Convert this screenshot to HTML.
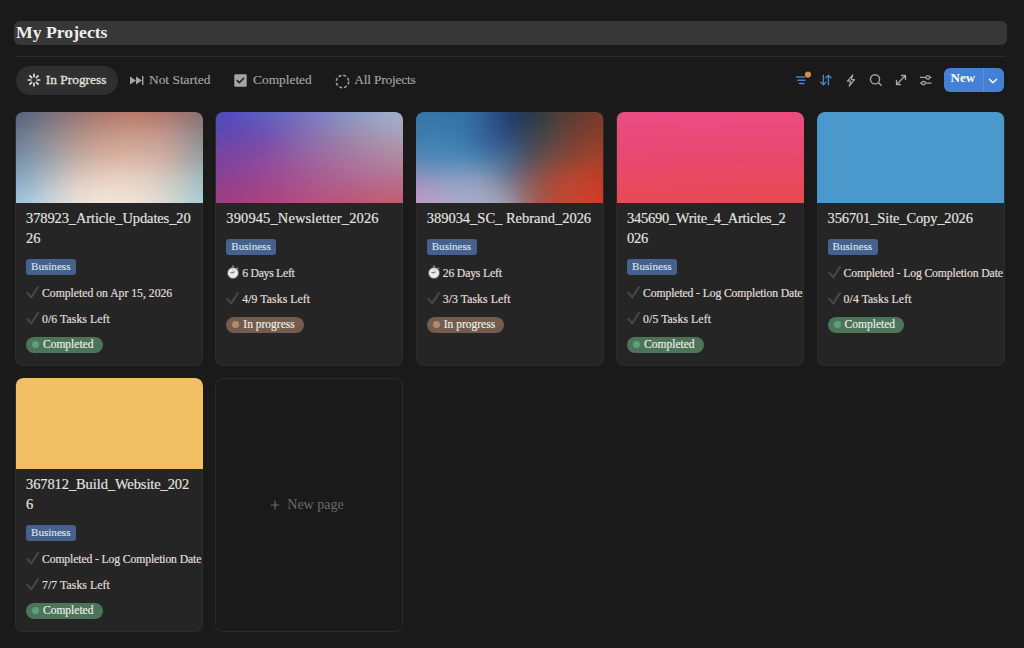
<!DOCTYPE html>
<html><head><meta charset="utf-8">
<style>
*{box-sizing:border-box;margin:0;padding:0}
html,body{width:1024px;height:648px;overflow:hidden;background:#1a1a1a;font-family:"Liberation Serif",serif;color:#e4e2de}
.abs{position:absolute}
#titlebar{position:absolute;left:14px;top:21px;width:993px;height:24px;background:#373737;border-radius:6px}
#title{position:absolute;left:16px;top:20px;font-weight:bold;font-size:17.7px;line-height:24px;color:#f0eeea;white-space:nowrap}
#divider{position:absolute;left:16px;top:56px;width:990px;height:1px;background:#2c2c2c}
.pill{position:absolute;left:16px;top:66px;width:102px;height:28.5px;border-radius:15px;background:#2f2f2f}
.tab{position:absolute;top:72px;font-size:13.4px;line-height:16px;white-space:nowrap;color:#a8a59f;-webkit-text-stroke:0.15px #a8a59f}
.tab.act{color:#e2e0dc;-webkit-text-stroke:0.3px #e2e0dc}
.card{position:absolute;width:188px;height:253.5px;background:#252525;border-radius:8px;box-shadow:0 0 0 1px #2c2c2b inset;overflow:hidden}
.cover{position:absolute;left:0.5px;top:0;width:187px;height:90.5px;border-radius:7px 7px 0 0;overflow:hidden}
.ctitle{position:absolute;left:11px;top:96px;font-size:14.5px;line-height:20px;color:#e6e4e0;white-space:nowrap;-webkit-text-stroke:0.15px #e6e4e0}
.tag{position:absolute;left:11px;height:15.7px;width:50px;border-radius:3px;background:#46628c;color:#dfe7f1;font-size:11.1px;line-height:15.7px;padding-left:5px;white-space:nowrap;-webkit-text-stroke:0.1px #dfe7f1}
.prop{position:absolute;left:11px;font-size:11.7px;line-height:16px;white-space:nowrap;color:#e0ded9;-webkit-text-stroke:0.2px #e0ded9}
.prop .ic{position:absolute;left:0;top:0}
.prop span.t{position:absolute;left:16px;top:0}
.badge{position:absolute;left:11px;height:15.5px;border-radius:8px;font-size:11.5px;line-height:15.5px;color:#eef0ec;white-space:nowrap;padding-left:17px;-webkit-text-stroke:0.15px #eef0ec}
.badge i{position:absolute;left:6px;top:4.3px;width:7px;height:7px;border-radius:50%}
.green{background:#4c7458}.green i{background:#5fa078}
.brown{background:#735c4b}.brown i{background:#af8c6e}
</style></head>
<body>
<div id="titlebar"></div>
<div id="title">My Projects</div>
<div id="divider"></div>
<div class="pill"></div>
<div class="tab act" style="left:45.8px">In Progress</div>
<div class="tab" style="left:149px">Not Started</div>
<div class="tab" style="left:253px">Completed</div>
<div class="tab" style="left:354.3px;letter-spacing:-0.2px">All Projects</div>

<!-- tab icons -->
<svg class="abs" style="left:26px;top:72.2px" width="16" height="16" viewBox="0 0 16 16"><g stroke="#e2e0dc" stroke-width="1.7" stroke-linecap="round"><line x1="11.30" y1="8.00" x2="13.70" y2="8.00"/><line x1="10.33" y1="10.33" x2="12.03" y2="12.03"/><line x1="8.00" y1="11.30" x2="8.00" y2="13.70"/><line x1="5.67" y1="10.33" x2="3.97" y2="12.03"/><line x1="4.70" y1="8.00" x2="2.30" y2="8.00"/><line x1="5.67" y1="5.67" x2="3.97" y2="3.97"/><line x1="8.00" y1="4.70" x2="8.00" y2="2.30"/><line x1="10.33" y1="5.67" x2="12.03" y2="3.97"/></g></svg>
<svg class="abs" style="left:129px;top:75px" width="16" height="11" viewBox="0 0 16 11">
<path d="M1 1.5 L7 5.5 L1 9.5Z M7 1.5 L13 5.5 L7 9.5Z" fill="#a8a59f"/>
<rect x="13" y="1" width="1.4" height="9" fill="#a8a59f"/>
</svg>
<svg class="abs" style="left:234px;top:74px" width="13" height="13" viewBox="0 0 13 13">
<rect x="0.3" y="0.3" width="12.4" height="12.4" rx="1" fill="#a8a59f"/>
<path d="M3.3 6.6 L5.4 8.7 L9.6 4.3" fill="none" stroke="#1f1f1f" stroke-width="1.6" stroke-linecap="round" stroke-linejoin="round"/>
</svg>
<svg class="abs" style="left:335px;top:73.5px" width="15" height="15" viewBox="0 0 15 15">
<circle cx="7.5" cy="7.5" r="6.2" fill="none" stroke="#a8a59f" stroke-width="1.5" stroke-dasharray="3 1.87"/>
</svg>
<!-- toolbar icons -->
<svg class="abs" style="left:794px;top:70px" width="18" height="18" viewBox="0 0 18 18">
<g stroke="#4a82cc" stroke-width="1.5" stroke-linecap="round">
<line x1="2.5" y1="7" x2="11" y2="7"/><line x1="4" y1="10.2" x2="11" y2="10.2"/><line x1="5.5" y1="13.4" x2="10" y2="13.4"/>
</g>
<circle cx="14" cy="4.6" r="3.1" fill="#d68a4e"/>
</svg>
<svg class="abs" style="left:819px;top:74px" width="14" height="12" viewBox="0 0 14 12">
<g stroke="#4a82cc" stroke-width="1.4" fill="none" stroke-linecap="round" stroke-linejoin="round">
<path d="M4.4 1.2 V10.8 M1.8 8.2 L4.4 10.8 L7 8.2"/>
<path d="M9.4 10.8 V1.2 M6.8 3.8 L9.4 1.2 L12 3.8"/>
</g></svg>
<svg class="abs" style="left:845px;top:73.5px" width="12" height="13" viewBox="0 0 12 13">
<path d="M7.8 0.9 L2.4 7.2 H5.7 L4.2 12.2 L9.6 5.6 H6.3 Z" fill="none" stroke="#a8a59f" stroke-width="1.2" stroke-linejoin="round"/>
</svg>
<svg class="abs" style="left:868px;top:72px" width="16" height="16" viewBox="0 0 16 16">
<circle cx="7" cy="7.3" r="4.6" fill="none" stroke="#a8a59f" stroke-width="1.4"/>
<line x1="10.3" y1="10.6" x2="13.2" y2="13.3" stroke="#a8a59f" stroke-width="1.4" stroke-linecap="round"/>
</svg>
<svg class="abs" style="left:894px;top:73px" width="14" height="14" viewBox="0 0 14 14">
<g stroke="#a8a59f" stroke-width="1.3" fill="none" stroke-linecap="round" stroke-linejoin="round">
<path d="M2.5 11.5 L11.5 2.5 M7.5 2.5 H11.5 V6.5 M2.5 7.5 V11.5 H6.5"/>
</g></svg>
<svg class="abs" style="left:918px;top:73px" width="16" height="14" viewBox="0 0 16 14">
<g stroke="#a8a59f" stroke-width="1.3" fill="none">
<line x1="2" y1="4.4" x2="13.5" y2="4.4"/><line x1="2" y1="10.1" x2="13.5" y2="10.1"/>
<circle cx="9.8" cy="4.4" r="1.8" fill="#1a1a1a"/><circle cx="5.6" cy="10.1" r="1.8" fill="#1a1a1a"/>
</g></svg>
<div class="abs" style="left:943.5px;top:68px;width:60.5px;height:24.2px;border-radius:6px;background:#4481d6"></div>
<div class="abs" style="left:983.3px;top:68px;width:1px;height:24.2px;background:#5b90d8"></div>
<div class="abs" style="left:950.5px;top:67.6px;font-weight:bold;font-size:13px;line-height:20px;color:#ffffff">New</div>
<svg class="abs" style="left:987px;top:76px" width="12" height="10" viewBox="0 0 12 10">
<path d="M2.4 3.2 L6 6.8 L9.6 3.2" fill="none" stroke="#ffffff" stroke-width="1.4" stroke-linecap="round" stroke-linejoin="round"/>
</svg>
<!--CARDS--><div class="card" style="left:15px;top:112px"><div class="cover c0"><div style="position:absolute;inset:0;background:linear-gradient(to right, #5a6482, #656a80, #74707e, #85747a, #967676, #a57871, #b07a6c, #b77a6a, #b87a6a, #b2786d, #a87670, #987471, #8a7272)"></div><div style="position:absolute;inset:0;background:linear-gradient(to right, #616c87, #6d7387, #7e7a85, #907e81, #a2817d, #af857a, #b98778, #be8978, #bf8878, #ba867c, #af847f, #9c807e, #8b7c7c);-webkit-mask-image:linear-gradient(to bottom, transparent 0.0%, #000 12.5%);mask-image:linear-gradient(to bottom, transparent 0.0%, #000 12.5%)"></div><div style="position:absolute;inset:0;background:linear-gradient(to right, #6a7890, #788090, #8a8890, #9e8c8c, #b09088, #bc9487, #c49888, #c89a89, #c89a8a, #c3988e, #b89490, #a28f8d, #8e8a8a);-webkit-mask-image:linear-gradient(to bottom, transparent 12.5%, #000 25.0%);mask-image:linear-gradient(to bottom, transparent 12.5%, #000 25.0%)"></div><div style="position:absolute;inset:0;background:linear-gradient(to right, #71849c, #7e8b9d, #91949c, #a59999, #b89e95, #c5a294, #cda595, #d1a796, #d0a797, #caa499, #bea09a, #a79b98, #929696);-webkit-mask-image:linear-gradient(to bottom, transparent 25.0%, #000 37.5%);mask-image:linear-gradient(to bottom, transparent 25.0%, #000 37.5%)"></div><div style="position:absolute;inset:0;background:linear-gradient(to right, #7890aa, #8697aa, #98a0aa, #ada7a7, #c0aca4, #cdb0a2, #d6b2a2, #dab4a3, #d8b4a4, #d1b1a4, #c4aca4, #ada6a3, #98a2a2);-webkit-mask-image:linear-gradient(to bottom, transparent 37.5%, #000 50.0%);mask-image:linear-gradient(to bottom, transparent 37.5%, #000 50.0%)"></div><div style="position:absolute;inset:0;background:linear-gradient(to right, #809db7, #8fa5b7, #a4aeb7, #bab5b6, #cebbb4, #dac0b4, #e0c2b3, #e1c4b4, #dec3b5, #d6bfb4, #c8bab2, #b2b4b2, #9eb0b2);-webkit-mask-image:linear-gradient(to bottom, transparent 50.0%, #000 62.5%);mask-image:linear-gradient(to bottom, transparent 50.0%, #000 62.5%)"></div><div style="position:absolute;inset:0;background:linear-gradient(to right, #88aac4, #99b2c4, #b0bcc4, #c8c4c4, #dccac4, #e5cfc4, #e8d2c4, #e8d2c4, #e4d0c4, #dacdc2, #ccc8c0, #b6c2c0, #a4bcc0);-webkit-mask-image:linear-gradient(to bottom, transparent 62.5%, #000 75.0%);mask-image:linear-gradient(to bottom, transparent 62.5%, #000 75.0%)"></div><div style="position:absolute;inset:0;background:linear-gradient(to right, #93b9d1, #a5c0d1, #bccad2, #d2d1d1, #e4d7d0, #ecdbd0, #eeddd0, #eedccf, #e9dace, #ded6cc, #ced2ca, #b9cbca, #a7c6ca);-webkit-mask-image:linear-gradient(to bottom, transparent 75.0%, #000 87.5%);mask-image:linear-gradient(to bottom, transparent 75.0%, #000 87.5%)"></div><div style="position:absolute;inset:0;background:linear-gradient(to right, #9cc4da, #aecbdb, #c4d4dc, #d8dbda, #e8e0d8, #f0e3d8, #f2e4d8, #f1e3d6, #ece0d4, #e0dcd2, #d0d8d0, #bad2d0, #a8ccd0);-webkit-mask-image:linear-gradient(to bottom, transparent 87.5%, #000 100.0%);mask-image:linear-gradient(to bottom, transparent 87.5%, #000 100.0%)"></div></div><div class="ctitle" style="letter-spacing:-0.12px">378923_Article_Updates_20<br>26</div><div class="tag" style="top:147px">Business</div><div class="prop" style="top:173.5px"><svg class="ic" width="14" height="14" viewBox="0 0 14 14" style="top:-1px"><path d="M1.3 7.9 L5.2 12.4 L11.9 2.2" fill="none" stroke="#474747" stroke-width="2.1" stroke-linecap="round" stroke-linejoin="round"/></svg><span class="t" style="letter-spacing:0px">Completed on Apr 15, 2026</span></div><div class="prop" style="top:200.0px"><svg class="ic" width="14" height="14" viewBox="0 0 14 14" style="top:-1px"><path d="M1.3 7.9 L5.2 12.4 L11.9 2.2" fill="none" stroke="#474747" stroke-width="2.1" stroke-linecap="round" stroke-linejoin="round"/></svg><span class="t" style="letter-spacing:0.1px">0/6 Tasks Left</span></div><div class="badge green" style="top:225.2px;width:76.5px"><i></i>Completed</div></div>
<div class="card" style="left:215.3px;top:112px"><div class="cover c1"><div style="position:absolute;inset:0;background:linear-gradient(to right, #5048c0, #544ec0, #5957c0, #6060c0, #6768c1, #706fc3, #7878c4, #8084c5, #8791c7, #8e9cc8, #95a5c9, #9babcb, #a0b0cc)"></div><div style="position:absolute;inset:0;background:linear-gradient(to right, #5648b9, #5a4cb9, #6051b9, #6658b9, #6e61ba, #776aba, #7f75bb, #8680bc, #8e8bbc, #9495bd, #9a9ebf, #a0a5c2, #a4a9c4);-webkit-mask-image:linear-gradient(to bottom, transparent 0.0%, #000 12.5%);mask-image:linear-gradient(to bottom, transparent 0.0%, #000 12.5%)"></div><div style="position:absolute;inset:0;background:linear-gradient(to right, #6048b0, #6449b0, #694bb0, #7050b0, #7859b0, #8065b0, #8870b0, #8f7ab0, #9683af, #9c8cb0, #a194b2, #a59bb6, #a8a0b8);-webkit-mask-image:linear-gradient(to bottom, transparent 12.5%, #000 25.0%);mask-image:linear-gradient(to bottom, transparent 12.5%, #000 25.0%)"></div><div style="position:absolute;inset:0;background:linear-gradient(to right, #6d46a8, #7147a8, #7749a8, #7d4da8, #8455a8, #8a60a8, #916aa8, #9773a8, #9d7ba7, #a283a8, #a78aa9, #aa91aa, #ac96ac);-webkit-mask-image:linear-gradient(to bottom, transparent 25.0%, #000 37.5%);mask-image:linear-gradient(to bottom, transparent 25.0%, #000 37.5%)"></div><div style="position:absolute;inset:0;background:linear-gradient(to right, #7a44a0, #7e45a0, #8448a0, #8a4ca0, #8f53a0, #955ca0, #9a64a0, #9f6ca0, #a473a0, #a87aa0, #ab80a0, #ae86a0, #b08aa0);-webkit-mask-image:linear-gradient(to bottom, transparent 37.5%, #000 50.0%);mask-image:linear-gradient(to bottom, transparent 37.5%, #000 50.0%)"></div><div style="position:absolute;inset:0;background:linear-gradient(to right, #834298, #874498, #8d4698, #934a98, #985098, #9d5798, #a15e98, #a56498, #a96b98, #ac7198, #af7699, #b27a99, #b47d98);-webkit-mask-image:linear-gradient(to bottom, transparent 50.0%, #000 62.5%);mask-image:linear-gradient(to bottom, transparent 50.0%, #000 62.5%)"></div><div style="position:absolute;inset:0;background:linear-gradient(to right, #8c4090, #904290, #954490, #9a4890, #9f4d90, #a45290, #a85890, #ab5e90, #ae6390, #b06890, #b36c90, #b66e90, #b87090);-webkit-mask-image:linear-gradient(to bottom, transparent 62.5%, #000 75.0%);mask-image:linear-gradient(to bottom, transparent 62.5%, #000 75.0%)"></div><div style="position:absolute;inset:0;background:linear-gradient(to right, #973e87, #9a4087, #9e4287, #a24687, #a64a87, #ab4f87, #af5387, #b25786, #b45b84, #b65f83, #b96282, #bb6580, #bc667f);-webkit-mask-image:linear-gradient(to bottom, transparent 75.0%, #000 87.5%);mask-image:linear-gradient(to bottom, transparent 75.0%, #000 87.5%)"></div><div style="position:absolute;inset:0;background:linear-gradient(to right, #a03c80, #a23e80, #a54180, #a84480, #ac4880, #b04c81, #b45080, #b7537e, #ba557b, #bc5878, #be5b75, #bf5e72, #c06070);-webkit-mask-image:linear-gradient(to bottom, transparent 87.5%, #000 100.0%);mask-image:linear-gradient(to bottom, transparent 87.5%, #000 100.0%)"></div></div><div class="ctitle" style="letter-spacing:0.114px">390945_Newsletter_2026</div><div class="tag" style="top:127px">Business</div><div class="prop" style="top:153.5px"><svg class="ic" width="14" height="14" viewBox="0 0 14 14" style="top:-0.5px"><rect x="5.9" y="0.5" width="2.2" height="2.4" rx="0.4" fill="#7d7f84"/><rect x="10.2" y="2.4" width="1.9" height="2.4" rx="0.4" transform="rotate(45 11.15 3.6)" fill="#7d7f84"/><circle cx="7" cy="8" r="5.5" fill="#ececf0" stroke="#5d5f64" stroke-width="0.9"/><line x1="7" y1="8" x2="7" y2="3.7" stroke="#e0a070" stroke-width="0.7"/><line x1="7" y1="8" x2="4.4" y2="7.5" stroke="#4a4a4a" stroke-width="0.8"/><line x1="7" y1="8" x2="8.9" y2="6.5" stroke="#4a4a4a" stroke-width="0.7"/></svg><span class="t" style="letter-spacing:-0.27px">6 Days Left</span></div><div class="prop" style="top:180.0px"><svg class="ic" width="14" height="14" viewBox="0 0 14 14" style="top:-1px"><path d="M1.3 7.9 L5.2 12.4 L11.9 2.2" fill="none" stroke="#474747" stroke-width="2.1" stroke-linecap="round" stroke-linejoin="round"/></svg><span class="t" style="letter-spacing:0.1px">4/9 Tasks Left</span></div><div class="badge brown" style="top:205.2px;width:77.5px"><i></i>In progress</div></div>
<div class="card" style="left:415.7px;top:112px"><div class="cover c2"><div style="position:absolute;inset:0;background:linear-gradient(to right, #3878a8, #3775a7, #3574a6, #3272a4, #306599, #2a5285, #22406c, #253a53, #333b41, #4a3e38, #5a3d32, #6b3c2e, #7a3c2c)"></div><div style="position:absolute;inset:0;background:linear-gradient(to right, #3879a9, #3979aa, #3878a9, #3573a6, #32659c, #2c548a, #264471, #2b3f56, #3a3f44, #50413c, #633f35, #753d30, #823c2c);-webkit-mask-image:linear-gradient(to bottom, transparent 0.0%, #000 12.5%);mask-image:linear-gradient(to bottom, transparent 0.0%, #000 12.5%)"></div><div style="position:absolute;inset:0;background:linear-gradient(to right, #3c7cac, #3e7eae, #3d7dae, #3a76aa, #3668a1, #315990, #2e4c78, #35465c, #454449, #5a4440, #704138, #823f31, #8e3c2c);-webkit-mask-image:linear-gradient(to bottom, transparent 12.5%, #000 25.0%);mask-image:linear-gradient(to bottom, transparent 12.5%, #000 25.0%)"></div><div style="position:absolute;inset:0;background:linear-gradient(to right, #4682b2, #4583b2, #4382b1, #417eae, #3d71a7, #3a6498, #3a5880, #424d62, #52484c, #684741, #7d4436, #8e402f, #9a3d2c);-webkit-mask-image:linear-gradient(to bottom, transparent 25.0%, #000 37.5%);mask-image:linear-gradient(to bottom, transparent 25.0%, #000 37.5%)"></div><div style="position:absolute;inset:0;background:linear-gradient(to right, #5888b8, #5488b7, #5189b6, #4e88b4, #4b7eae, #49729f, #4a6488, #535667, #644d4e, #7a4a40, #8c4633, #9c422d, #a83e2c);-webkit-mask-image:linear-gradient(to bottom, transparent 37.5%, #000 50.0%);mask-image:linear-gradient(to bottom, transparent 37.5%, #000 50.0%)"></div><div style="position:absolute;inset:0;background:linear-gradient(to right, #778cbc, #738fbc, #6f93bd, #6c95bc, #6a8eb5, #6581a5, #5f6e8c, #6a5d68, #7d514d, #934a3d, #a34633, #af422c, #b73d29);-webkit-mask-image:linear-gradient(to bottom, transparent 50.0%, #000 62.5%);mask-image:linear-gradient(to bottom, transparent 50.0%, #000 62.5%)"></div><div style="position:absolute;inset:0;background:linear-gradient(to right, #9890c0, #9497c1, #909dc3, #8ca0c4, #8a9dbb, #828faa, #767890, #816469, #94554b, #aa4a3a, #b74633, #c0412c, #c43c26);-webkit-mask-image:linear-gradient(to bottom, transparent 62.5%, #000 75.0%);mask-image:linear-gradient(to bottom, transparent 62.5%, #000 75.0%)"></div><div style="position:absolute;inset:0;background:linear-gradient(to right, #b096c4, #aa9cc5, #a4a2c7, #9ea6c7, #9ca5c2, #959bb4, #8c879a, #926b6d, #a1564a, #b44a39, #c04632, #c8412c, #cc3b24);-webkit-mask-image:linear-gradient(to bottom, transparent 75.0%, #000 87.5%);mask-image:linear-gradient(to bottom, transparent 75.0%, #000 87.5%)"></div><div style="position:absolute;inset:0;background:linear-gradient(to right, #c09cc8, #b8a0c8, #b0a4c8, #a8a8c8, #a5aac8, #a1a4bd, #9c94a4, #9d7070, #a75649, #b84a38, #c44632, #cc412b, #d03a22);-webkit-mask-image:linear-gradient(to bottom, transparent 87.5%, #000 100.0%);mask-image:linear-gradient(to bottom, transparent 87.5%, #000 100.0%)"></div></div><div class="ctitle" style="letter-spacing:-0.014px">389034_SC_ Rebrand_2026</div><div class="tag" style="top:127px">Business</div><div class="prop" style="top:153.5px"><svg class="ic" width="14" height="14" viewBox="0 0 14 14" style="top:-0.5px"><rect x="5.9" y="0.5" width="2.2" height="2.4" rx="0.4" fill="#7d7f84"/><rect x="10.2" y="2.4" width="1.9" height="2.4" rx="0.4" transform="rotate(45 11.15 3.6)" fill="#7d7f84"/><circle cx="7" cy="8" r="5.5" fill="#ececf0" stroke="#5d5f64" stroke-width="0.9"/><line x1="7" y1="8" x2="7" y2="3.7" stroke="#e0a070" stroke-width="0.7"/><line x1="7" y1="8" x2="4.4" y2="7.5" stroke="#4a4a4a" stroke-width="0.8"/><line x1="7" y1="8" x2="8.9" y2="6.5" stroke="#4a4a4a" stroke-width="0.7"/></svg><span class="t" style="letter-spacing:-0.15px">26 Days Left</span></div><div class="prop" style="top:180.0px"><svg class="ic" width="14" height="14" viewBox="0 0 14 14" style="top:-1px"><path d="M1.3 7.9 L5.2 12.4 L11.9 2.2" fill="none" stroke="#474747" stroke-width="2.1" stroke-linecap="round" stroke-linejoin="round"/></svg><span class="t" style="letter-spacing:0.1px">3/3 Tasks Left</span></div><div class="badge brown" style="top:205.2px;width:77.5px"><i></i>In progress</div></div>
<div class="card" style="left:616.1px;top:112px"><div class="cover c3"><div style="position:absolute;inset:0;background:linear-gradient(to right, #ea4c84, #ea4c84, #ea4c83, #ea4c83, #eb4c83, #eb4c82, #eb4c82, #eb4c82, #eb4c81, #ec4c81, #ec4c81, #ec4c80, #ec4c80)"></div><div style="position:absolute;inset:0;background:linear-gradient(to right, #ea4c80, #ea4c80, #ea4c80, #ea4c7f, #ea4c7f, #ea4c7f, #ea4c7f, #eb4c7e, #eb4c7e, #eb4c7e, #eb4c7d, #eb4c7d, #eb4c7d);-webkit-mask-image:linear-gradient(to bottom, transparent 0.0%, #000 12.5%);mask-image:linear-gradient(to bottom, transparent 0.0%, #000 12.5%)"></div><div style="position:absolute;inset:0;background:linear-gradient(to right, #e94b7b, #e94b7b, #e94b7b, #e94b7a, #e94b7a, #e94b7a, #ea4b7a, #ea4b79, #ea4b79, #ea4b79, #ea4b78, #ea4b78, #ea4b78);-webkit-mask-image:linear-gradient(to bottom, transparent 12.5%, #000 25.0%);mask-image:linear-gradient(to bottom, transparent 12.5%, #000 25.0%)"></div><div style="position:absolute;inset:0;background:linear-gradient(to right, #e84a76, #e84a75, #e84a75, #e94a75, #e94a74, #e94a74, #e94a74, #e94a74, #e94a73, #e94a73, #e94a73, #e94a72, #e94a72);-webkit-mask-image:linear-gradient(to bottom, transparent 25.0%, #000 37.5%);mask-image:linear-gradient(to bottom, transparent 25.0%, #000 37.5%)"></div><div style="position:absolute;inset:0;background:linear-gradient(to right, #e84a70, #e84a70, #e84a6f, #e84a6f, #e84a6f, #e84a6e, #e84a6e, #e84a6e, #e84a6d, #e84a6d, #e84a6d, #e84a6c, #e84a6c);-webkit-mask-image:linear-gradient(to bottom, transparent 37.5%, #000 50.0%);mask-image:linear-gradient(to bottom, transparent 37.5%, #000 50.0%)"></div><div style="position:absolute;inset:0;background:linear-gradient(to right, #e84a6a, #e84a6a, #e84a69, #e84a69, #e84a68, #e84a68, #e84a68, #e84a67, #e84a67, #e84a66, #e84a66, #e84a65, #e84a65);-webkit-mask-image:linear-gradient(to bottom, transparent 50.0%, #000 62.5%);mask-image:linear-gradient(to bottom, transparent 50.0%, #000 62.5%)"></div><div style="position:absolute;inset:0;background:linear-gradient(to right, #e84a64, #e84a63, #e84a63, #e84a62, #e84a61, #e84a61, #e84a60, #e84a60, #e84a5f, #e84a5e, #e84a5e, #e84a5d, #e84a5d);-webkit-mask-image:linear-gradient(to bottom, transparent 62.5%, #000 75.0%);mask-image:linear-gradient(to bottom, transparent 62.5%, #000 75.0%)"></div><div style="position:absolute;inset:0;background:linear-gradient(to right, #e84a5e, #e84a5d, #e84a5d, #e84a5c, #e84a5b, #e84a5a, #e84a5a, #e84a59, #e84a58, #e84a57, #e84a57, #e84a56, #e84a55);-webkit-mask-image:linear-gradient(to bottom, transparent 75.0%, #000 87.5%);mask-image:linear-gradient(to bottom, transparent 75.0%, #000 87.5%)"></div><div style="position:absolute;inset:0;background:linear-gradient(to right, #e84a5a, #e84a59, #e84a58, #e84a58, #e84a57, #e84a56, #e84a55, #e84a54, #e84a53, #e84a52, #e84a52, #e84a51, #e84a50);-webkit-mask-image:linear-gradient(to bottom, transparent 87.5%, #000 100.0%);mask-image:linear-gradient(to bottom, transparent 87.5%, #000 100.0%)"></div></div><div class="ctitle" style="letter-spacing:-0.283px">345690_Write_4_Articles_2<br>026</div><div class="tag" style="top:147px">Business</div><div class="prop" style="top:173.5px"><svg class="ic" width="14" height="14" viewBox="0 0 14 14" style="top:-1px"><path d="M1.3 7.9 L5.2 12.4 L11.9 2.2" fill="none" stroke="#474747" stroke-width="2.1" stroke-linecap="round" stroke-linejoin="round"/></svg><span class="t" style="letter-spacing:-0.12px">Completed - Log Completion Date</span></div><div class="prop" style="top:200.0px"><svg class="ic" width="14" height="14" viewBox="0 0 14 14" style="top:-1px"><path d="M1.3 7.9 L5.2 12.4 L11.9 2.2" fill="none" stroke="#474747" stroke-width="2.1" stroke-linecap="round" stroke-linejoin="round"/></svg><span class="t" style="letter-spacing:0.1px">0/5 Tasks Left</span></div><div class="badge green" style="top:225.2px;width:76.5px"><i></i>Completed</div></div>
<div class="card" style="left:816.6px;top:112px"><div class="cover c4" style="background:#4a98cc"></div><div class="ctitle" style="letter-spacing:-0.145px">356701_Site_Copy_2026</div><div class="tag" style="top:127px">Business</div><div class="prop" style="top:153.5px"><svg class="ic" width="14" height="14" viewBox="0 0 14 14" style="top:-1px"><path d="M1.3 7.9 L5.2 12.4 L11.9 2.2" fill="none" stroke="#474747" stroke-width="2.1" stroke-linecap="round" stroke-linejoin="round"/></svg><span class="t" style="letter-spacing:-0.12px">Completed - Log Completion Date</span></div><div class="prop" style="top:180.0px"><svg class="ic" width="14" height="14" viewBox="0 0 14 14" style="top:-1px"><path d="M1.3 7.9 L5.2 12.4 L11.9 2.2" fill="none" stroke="#474747" stroke-width="2.1" stroke-linecap="round" stroke-linejoin="round"/></svg><span class="t" style="letter-spacing:0.1px">0/4 Tasks Left</span></div><div class="badge green" style="top:205.2px;width:76.5px"><i></i>Completed</div></div>
<div class="card" style="left:15px;top:378px"><div class="cover c5" style="background:#f2c064"></div><div class="ctitle" style="letter-spacing:-0.1px">367812_Build_Website_202<br>6</div><div class="tag" style="top:147px">Business</div><div class="prop" style="top:173.5px"><svg class="ic" width="14" height="14" viewBox="0 0 14 14" style="top:-1px"><path d="M1.3 7.9 L5.2 12.4 L11.9 2.2" fill="none" stroke="#474747" stroke-width="2.1" stroke-linecap="round" stroke-linejoin="round"/></svg><span class="t" style="letter-spacing:-0.12px">Completed - Log Completion Date</span></div><div class="prop" style="top:200.0px"><svg class="ic" width="14" height="14" viewBox="0 0 14 14" style="top:-1px"><path d="M1.3 7.9 L5.2 12.4 L11.9 2.2" fill="none" stroke="#474747" stroke-width="2.1" stroke-linecap="round" stroke-linejoin="round"/></svg><span class="t" style="letter-spacing:0.1px">7/7 Tasks Left</span></div><div class="badge green" style="top:225.2px;width:76.5px"><i></i>Completed</div></div>
<div class="abs" style="left:215.3px;top:378px;width:188px;height:254px;border-radius:8px;box-shadow:0 0 0 1px #2a2a2a inset"></div>
<svg class="abs" style="left:270px;top:500px" width="10" height="10" viewBox="0 0 10 10"><path d="M5 0.8 V9.2 M0.8 5 H9.2" stroke="#6f6c67" stroke-width="1.2"/></svg>
<div class="abs" style="left:287.3px;top:495.8px;font-size:14px;line-height:18px;color:#6f6c67;white-space:nowrap">New page</div><!--/CARDS-->
</body></html>
